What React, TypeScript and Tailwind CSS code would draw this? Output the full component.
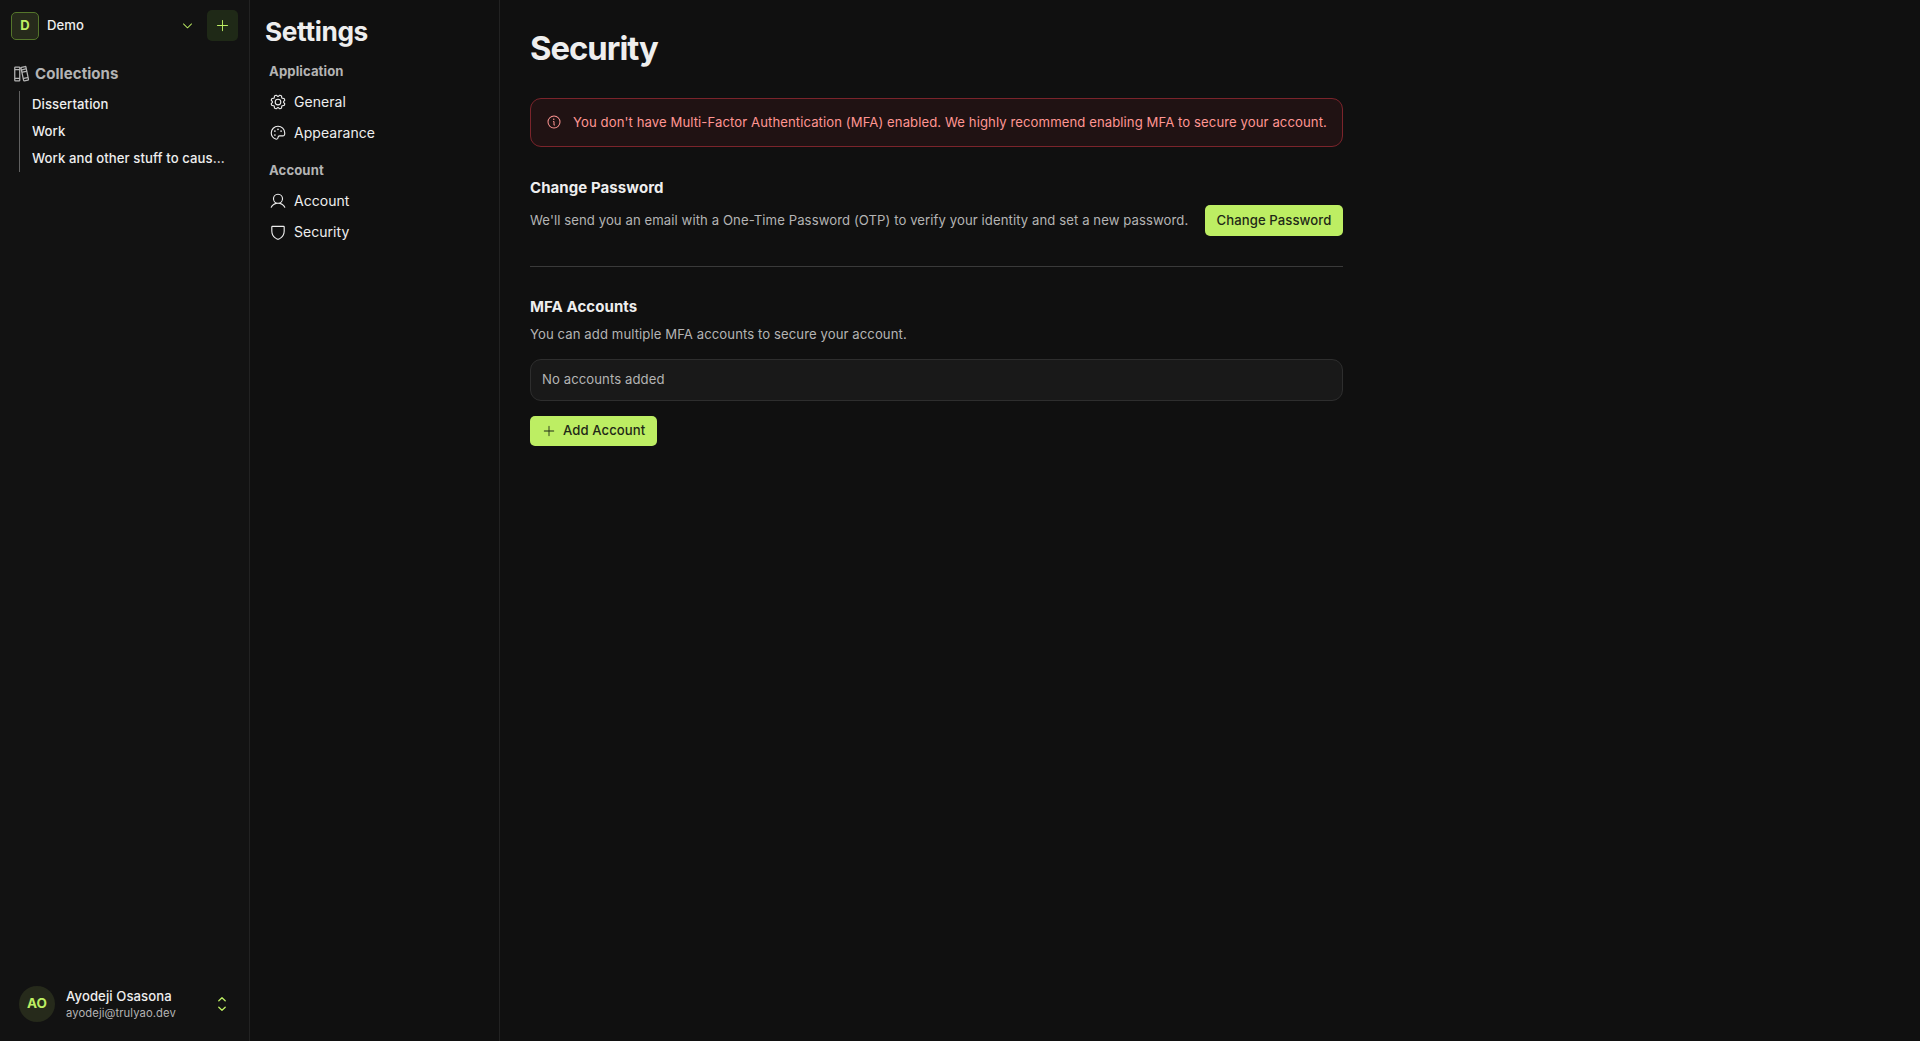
import {
  PiBooks,
  PiCaretDown,
  PiGear,
  PiInfo,
  PiPalette,
  PiPlus,
  PiShield,
  PiUser,
} from "react-icons/pi";
import type { IconType } from "react-icons";

const collections = ["Dissertation", "Work", "Work and other stuff to cause overflow"];

const groups: { title: string; items: { label: string; icon: IconType }[] }[] = [
  {
    title: "Application",
    items: [
      { label: "General", icon: PiGear },
      { label: "Appearance", icon: PiPalette },
    ],
  },
  {
    title: "Account",
    items: [
      { label: "Account", icon: PiUser },
      { label: "Security", icon: PiShield },
    ],
  },
];

function SwitchIcon() {
  return (
    <svg
      viewBox="0 0 18 18"
      fill="none"
      stroke="currentColor"
      strokeWidth="1.35"
      strokeLinecap="round"
      strokeLinejoin="round"
      className="mr-[18px] size-[18px] text-[#bdee63]"
    >
      <path d="M5.8 5.7 9 2.8l3.2 2.9M5.8 12.3 9 15.2l3.2-2.9" />
    </svg>
  );
}

function Sidebar() {
  return (
    <aside className="flex w-[250px] shrink-0 flex-col border-r border-[#222222] bg-[#121212]">
      <div className="flex items-center pt-[10px] pr-[11px] pl-[11px]">
        <div className="flex size-7 items-center justify-center rounded-[5px] border border-[#54752b] bg-[#262a1b] text-[13px] leading-none font-bold text-[#bdee63]">
          D
        </div>
        <span className="mb-px ml-2 flex-1 text-[13.125px] leading-5 font-medium tracking-[0.007em]">Demo</span>
        <PiCaretDown className="mr-[13px] size-[13px] text-[#bdee63]" />
        <button className="flex size-[31px] items-center justify-center rounded-[5px] bg-[#1f2917] text-[#bdee63]">
          <PiPlus className="size-[15px]" />
        </button>
      </div>
      <div className="mt-[22px] flex items-center pl-[11px] text-[#b4b4b4]">
        <PiBooks className="size-5" />
        <span className="ml-1 text-[15px] leading-[22px] font-bold tracking-[0.005em]">Collections</span>
      </div>
      <ul className="mt-[6px] mr-5 ml-[19px] border-l border-[#606060] pl-3">
        {collections.map((name) => (
          <li key={name} className="truncate text-[13.125px] leading-[27px] font-medium tracking-[0.007em]">
            {name}
          </li>
        ))}
      </ul>
      <div className="mt-auto mb-[19px] flex items-center pl-[19px]">
        <div className="flex size-9 items-center justify-center rounded-full bg-[#262a1b] pb-px text-[13.5px] font-bold text-[#bdee63]">
          AO
        </div>
        <div className="ml-[11px] flex-1">
          <div className="text-[13.125px] leading-[18px] font-medium tracking-[0.007em]">Ayodeji Osasona</div>
          <div className="text-[11.25px] leading-4 tracking-[0.008em] text-[#b4b4b4]">ayodeji@trulyao.dev</div>
        </div>
        <SwitchIcon />
      </div>
    </aside>
  );
}

function SettingsNav() {
  return (
    <nav className="w-[250px] shrink-0 border-r border-[#222222] px-[15px] pt-[14px]">
      <h1 className="text-[26.25px] leading-9 font-bold tracking-[-0.014em]">Settings</h1>
      {groups.map((group, i) => (
        <section key={group.title} className={i === 0 ? "mt-3 pl-1" : "mt-[13px] pl-1"}>
          <h2 className="text-[13.125px] leading-[18px] font-bold tracking-[0.008em] text-[#b4b4b4]">{group.title}</h2>
          <ul className="mt-[6px]">
            {group.items.map(({ label, icon: Icon }) => (
              <li key={label} className="flex h-[31px] items-center">
                <Icon className="size-[18px]" />
                <span className="ml-[7px] text-[14px] leading-5 tracking-[0.003em]">{label}</span>
              </li>
            ))}
          </ul>
        </section>
      ))}
    </nav>
  );
}

export default function App() {
  return (
    <div className="flex h-[1041px] w-[1920px] overflow-hidden bg-[#101010] font-['Inter',sans-serif] text-[#eeeeee]">
      <Sidebar />
      <SettingsNav />
      <main className="flex w-[843px] flex-col pl-[30px]">
        <h1 className="mt-7 text-[32.8px] leading-10 font-bold tracking-[-0.03em]">Security</h1>
        <div className="mt-[30px] flex h-[49px] items-center rounded-[11px] border border-[#7b242b] bg-[#201213] pb-px pl-[15px] text-[#ff9592]">
          <PiInfo className="size-4 shrink-0" />
          <p className="ml-[11px] text-[13.125px] leading-5 tracking-[0.007em] whitespace-nowrap">
            You don't have Multi-Factor Authentication (MFA) enabled. We highly recommend enabling MFA to secure your account.
          </p>
        </div>
        <h2 className="mt-[29px] text-[15px] leading-6 font-bold tracking-[0.005em]">Change Password</h2>
        <div className="mt-[5px] flex items-center justify-between">
          <p className="pb-px text-[13.125px] leading-5 tracking-[0.007em] whitespace-nowrap text-[#b4b4b4]">
            We'll send you an email with a One-Time Password (OTP) to verify your identity and set a new password.
          </p>
          <button className="h-[31px] w-[138px] shrink-0 rounded-[5px] bg-[#bdee63] text-[13.125px] font-medium tracking-[0.007em] whitespace-nowrap text-[#1f2917]">
            Change Password
          </button>
        </div>
        <hr className="mt-[30px] border-[#3a3a3a]" />
        <h2 className="mt-[28px] text-[15px] leading-6 font-bold tracking-[0.005em]">MFA Accounts</h2>
        <p className="mt-[5px] text-[13.125px] leading-5 tracking-[0.007em] text-[#b4b4b4]">
          You can add multiple MFA accounts to secure your account.
        </p>
        <div className="mt-[15px] flex h-[42px] items-center rounded-[11px] border border-[#2e2e2e] bg-[#191919] pl-[11px] text-[13.125px] tracking-[0.007em] text-[#b4b4b4]">
          No accounts added
        </div>
        <button className="mt-[15px] flex h-[30px] w-[127px] items-center rounded-[5px] bg-[#bdee63] pl-3 text-[13.125px] font-medium tracking-[0.007em] text-[#1f2917]">
          <PiPlus className="size-[14px]" />
          <span className="ml-[7px] whitespace-nowrap">Add Account</span>
        </button>
      </main>
    </div>
  );
}
